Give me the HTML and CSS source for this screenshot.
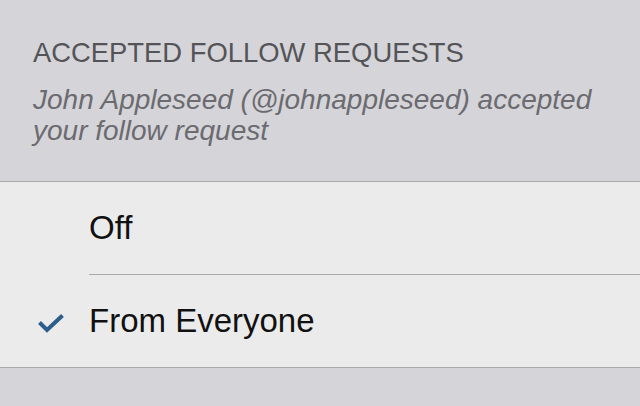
FILE: index.html
```html
<!DOCTYPE html>
<html>
<head>
<meta charset="utf-8">
<link rel="stylesheet" href="styles.css">
</head>
<body>
<div class="m-section">
    <h2 class="m-sectionTitle">ACCEPTED FOLLOW REQUESTS</h2>
    <p class="m-sectionDesc">John Appleseed (@johnappleseed) accepted your follow request</p>
</div>
<ul class="m-options">
    <li class="m-option">
        <span class="m-check"></span>
        <span class="m-label">Off</span>
    </li>
    <li class="m-option z-checked">
        <span class="m-check">
            <svg width="28" height="20" viewBox="0 0 28 20"><path d="M2.5 8.5 L10 16 L25.5 1.5" fill="none" stroke="#2c5d8b" stroke-width="4"/></svg>
        </span>
        <span class="m-label">From Everyone</span>
    </li>
</ul>
</body>
</html>
```

FILE: styles.css
```css
html, body {margin: 0; padding: 0;}
body {background: #d5d4d9; font-family: "Liberation Sans", Arial, Helvetica, sans-serif; width: 640px; height: 406px; overflow: hidden;}
.m-section {padding: 37px 33px 35px 33px;}
.m-sectionTitle {margin: 0; font-size: 27.4px; line-height: 32px; font-weight: normal; color: #545458;}
.m-sectionDesc {margin: 15px 0 0; font-size: 28px; line-height: 31px; font-style: italic; color: #6b6b70;}
.m-options {list-style: none; margin: 0; padding: 0; background: #ebebeb; border-top: 1px solid #a9a9ac; border-bottom: 1px solid #a9a9ac;}
.m-option {display: flex; align-items: center; height: 92px;}
.m-option + .m-option {margin-top: 1px;}
.m-check {flex: 0 0 89px; display: flex; justify-content: center; padding-left: 12px; box-sizing: border-box; margin-top: 5px;}
.m-label {flex: 1; align-self: stretch; display: flex; align-items: center; font-size: 33px; color: #111;}
.m-option + .m-option .m-label {border-top: 1px solid #a9a9ac; margin-top: -1px;}
```
